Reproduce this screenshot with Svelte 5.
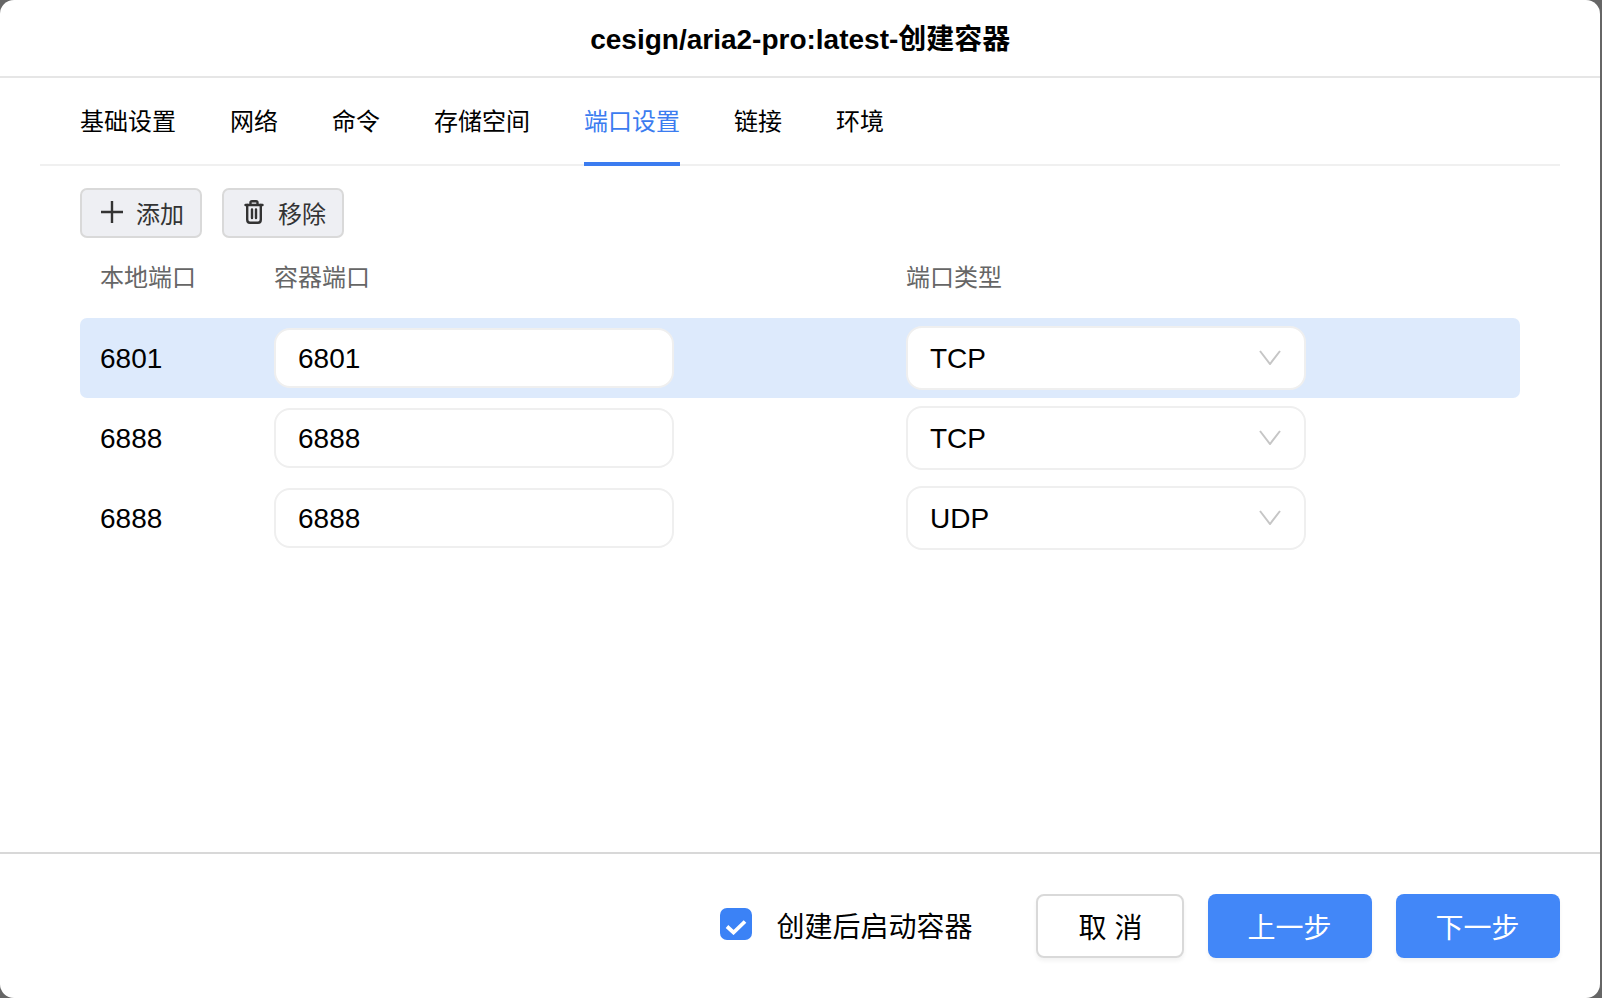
<script>
  const tabs = ['基础设置', '网络', '命令', '存储空间', '端口设置', '链接', '环境'];
  const rows = [
    { local: '6801', container: '6801', type: 'TCP', active: true },
    { local: '6888', container: '6888', type: 'TCP', active: false },
    { local: '6888', container: '6888', type: 'UDP', active: false }
  ];
</script>

<div class="modal">
  <header class="title">cesign/aria2-pro:latest-创建容器</header>

  <nav class="tabs">
    {#each tabs as tab}
      <div class="tab" class:current={tab === '端口设置'}>{tab}</div>
    {/each}
  </nav>

  <main class="body">
    <div class="toolbar">
      <button class="tool">
        <svg width="22" height="22" viewBox="0 0 22 22" fill="none" stroke="#333" stroke-width="2.4">
          <path d="M0 11H22M11 0V22" />
        </svg>
        <span>添加</span>
      </button>
      <button class="tool">
        <svg width="22" height="24" viewBox="0 0 22 24" fill="none" stroke="#333" stroke-width="2.4" stroke-linecap="round" stroke-linejoin="round">
          <path d="M2.5 5H19.5M7.5 5V2.5Q7.5 1.2 9 1.2H13Q14.5 1.2 14.5 2.5V5" />
          <path d="M4.2 5V19.5Q4.2 22.8 7 22.8H15Q17.8 22.8 17.8 19.5V5" />
          <path d="M9 9.5V18M13 9.5V18" />
        </svg>
        <span>移除</span>
      </button>
    </div>

    <div class="grid head">
      <div>本地端口</div>
      <div>容器端口</div>
      <div>端口类型</div>
    </div>

    {#each rows as row}
      <div class="grid row" class:active={row.active}>
        <div class="local">{row.local}</div>
        <input class="field" value={row.container} />
        <div class="select">
          <span>{row.type}</span>
          <svg width="22" height="15" viewBox="0 0 22 15" fill="none" stroke="#c6c6c6" stroke-width="2">
            <path d="M1 1L11 14L21 1" />
          </svg>
        </div>
      </div>
    {/each}
  </main>

  <footer class="footer">
    <label class="check">
      <span class="box">
        <svg width="22" height="16" viewBox="0 0 22 16" fill="none" stroke="#fff" stroke-width="3.8">
          <path d="M2 7.5L8.5 13.5L20 2.5" />
        </svg>
      </span>
      <span class="label">创建后启动容器</span>
    </label>
    <button class="btn plain">取 消</button>
    <button class="btn primary">上一步</button>
    <button class="btn primary">下一步</button>
  </footer>
</div>

<style>
  :global(body) {
    margin: 0;
    background: #666;
  }
  .modal {
    box-sizing: border-box;
    width: 1599.5px;
    height: 998px;
    display: flex;
    flex-direction: column;
    background: #fff;
    border-radius: 14px;
    overflow: hidden;
    color: #000;
    font-family: "Liberation Sans", "Noto Sans CJK SC", sans-serif;
    font-size: 24px;
  }
  .title {
    box-sizing: border-box;
    height: 78px;
    flex: none;
    display: flex;
    align-items: center;
    justify-content: center;
    padding: 0 0 2px 1px;
    border-bottom: 2px solid #e6e6e6;
    font-size: 28px;
    font-weight: 700;
  }
  .tabs {
    box-sizing: border-box;
    height: 88px;
    flex: none;
    display: flex;
    gap: 54px;
    margin: 0 40px;
    padding-left: 40px;
    border-bottom: 2px solid #f0f0f0;
  }
  .tab {
    box-sizing: border-box;
    height: 88px;
    line-height: 88px;
    border-bottom: 4px solid transparent;
  }
  .tab.current {
    color: #3b7cf0;
    border-bottom-color: #3b7cf0;
  }
  .body {
    flex: 1;
    padding: 22px 80px 0;
  }
  .toolbar {
    display: flex;
    gap: 20px;
  }
  .tool {
    box-sizing: border-box;
    width: 122px;
    height: 50px;
    display: flex;
    align-items: center;
    gap: 14px;
    padding: 0 0 0 18px;
    background: #eeeff3;
    border: 2px solid #d9d9d9;
    border-radius: 7px;
    color: #333;
    font: inherit;
  }
  .tool svg {
    flex: none;
    margin: 0 0 3px 1px;
  }
  .tool span {
    margin-left: -1px;
    padding-bottom: 2px;
  }
  .grid {
    display: grid;
    grid-template-columns: 174px 632px 1fr;
    align-items: center;
    height: 80px;
    padding-left: 20px;
  }
  .head {
    color: #666;
    padding-bottom: 5px;
    box-sizing: border-box;
  }
  .row {
    font-size: 28px;
    border-radius: 7px;
  }
  .row.active {
    background: #ddeafc;
  }
  .local {
    padding-top: 2px;
  }
  .field {
    box-sizing: border-box;
    width: 400px;
    height: 60px;
    padding: 2px 22px 0;
    background: #fff;
    border: 2px solid #efefef;
    border-radius: 16px;
    color: #000;
    font: inherit;
    outline: none;
  }
  .select {
    box-sizing: border-box;
    width: 400px;
    height: 64px;
    display: flex;
    align-items: center;
    justify-content: space-between;
    padding: 0 23px 0 22px;
    background: #fff;
    border: 2px solid #efefef;
    border-radius: 16px;
  }
  .select span {
    padding-top: 2px;
  }
  .select svg {
    margin-bottom: 2px;
  }
  .footer {
    box-sizing: border-box;
    height: 146px;
    flex: none;
    display: flex;
    align-items: flex-start;
    justify-content: flex-end;
    gap: 24px;
    padding: 40px 40px 0;
    border-top: 2px solid #d8d8d8;
    font-size: 28px;
  }
  .check {
    height: 64px;
    display: flex;
    align-items: center;
    gap: 24px;
    margin-right: 39px;
  }
  .box {
    width: 32px;
    height: 32px;
    display: flex;
    align-items: center;
    justify-content: center;
    background: #3b82f6;
    border-radius: 7px;
    margin-bottom: 4px;
  }
  .box svg {
    margin-top: 5px;
  }
  .label {
    padding-bottom: 2px;
  }
  .btn {
    box-sizing: border-box;
    height: 64px;
    padding-bottom: 2px;
    font: inherit;
    border-radius: 8px;
    box-shadow: 0 3px 4px rgba(0, 0, 0, 0.05);
  }
  .plain {
    width: 148px;
    padding-left: 8px;
    background: #fff;
    border: 2px solid #d9d9d9;
    color: #000;
  }
  .primary {
    width: 164px;
    background: #4287f8;
    border: 0;
    color: #fff;
  }
</style>
